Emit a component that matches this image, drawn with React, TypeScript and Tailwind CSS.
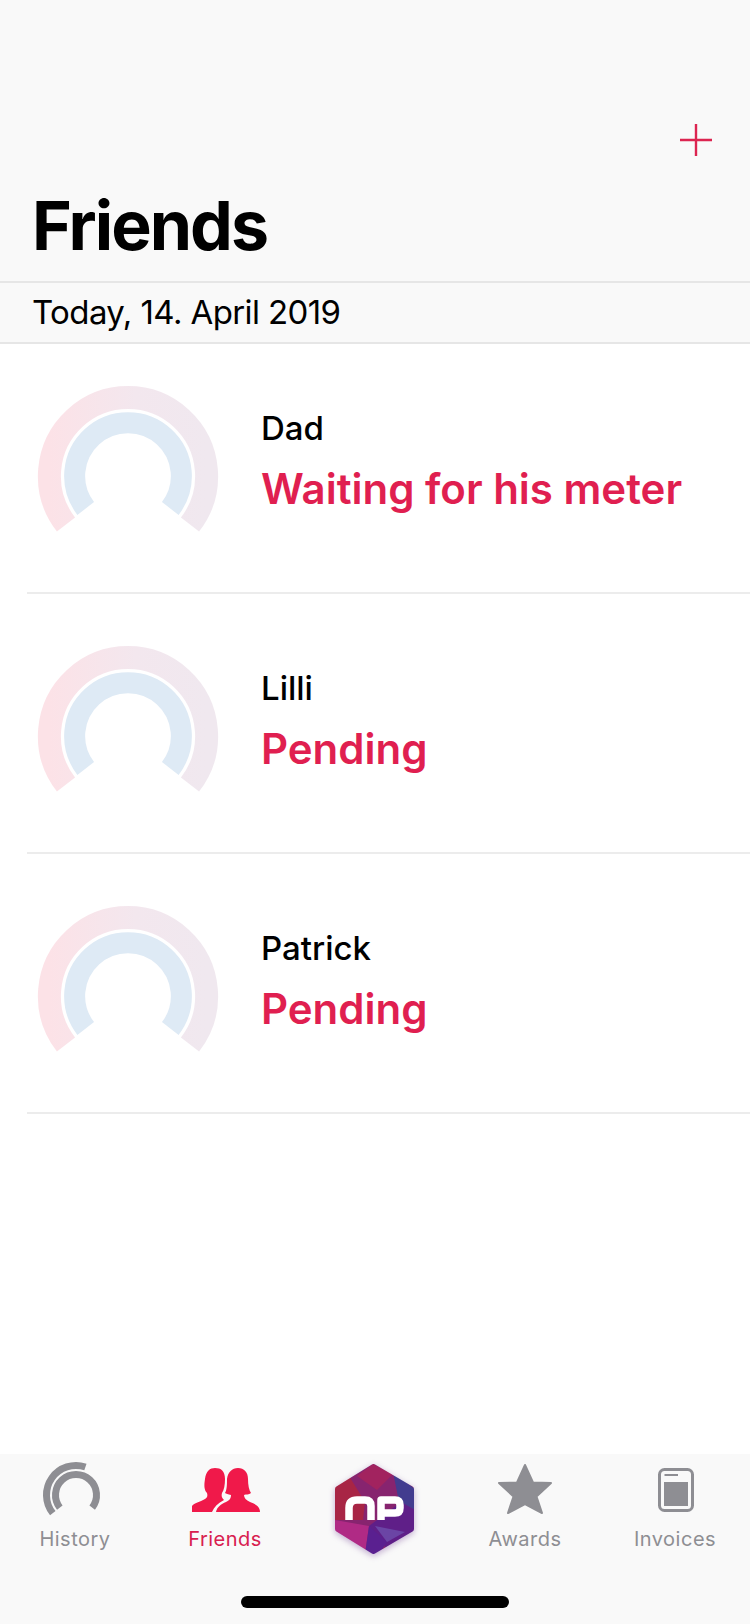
import React from 'react';

const friends = [
  { name: 'Dad', status: 'Waiting for his meter' },
  { name: 'Lilli', status: 'Pending' },
  { name: 'Patrick', status: 'Pending' },
];

function Gauge({ id }: { id: string }) {
  return (
    <svg width="178" height="150" viewBox="0 0 178 150" className="shrink-0 overflow-visible">
      <defs>
        <linearGradient id={id} x1="0" y1="0" x2="1" y2="0">
          <stop offset="0" stopColor="#fce2e7" />
          <stop offset="0.55" stopColor="#f3e7ee" />
          <stop offset="1" stopColor="#f0e8ef" />
        </linearGradient>
      </defs>
      <path d="M27 138.5 A78.6 78.6 0 1 1 151 138.5" fill="none" stroke={`url(#${id})`} strokeWidth="23" />
      <path d="M46.7 122.5 A53.35 53.35 0 1 1 131.3 122.5" fill="none" stroke="#deeaf5" strokeWidth="21" />
    </svg>
  );
}

function HistoryIcon() {
  return (
    <svg width="150" height="73" viewBox="0 0 150 73">
      <g fill="none" stroke="#8e8e93" strokeWidth="7">
        <path d="M52.8 59.2 A29.5 29.5 0 0 1 85.4 13" />
        <path d="M59.8 53.6 A20.5 20.5 0 1 1 92.2 53.6" />
      </g>
    </svg>
  );
}

function FriendsIcon() {
  return (
    <svg width="150" height="73" viewBox="0 0 150 73">
      <g fill="#f0194a">
        <path d="M42 58 V52 C44 49 50 48 55 45 C57 44 58 42 57 39 C54 36 54 31 55 25 C56 17 60 14 65 14 C71 14 75 17 75 25 C75 31 74 36 72 39 C71 42 72 44 74 46 C68 49 64 53 62 58 Z" />
        <path d="M66 58 C67 53 71 50 76 48 C80 46 81 44 81 41 C78 40 76 40 75 39 C77 36 77 30 77 25 C78 18 82 14 88 14 C94 14 98 18 98 25 C98 31 99 36 101 39 C99 41 96 40 94 41 C94 44 96 46 100 48 C105 50 110 52 110 58 Z" />
      </g>
    </svg>
  );
}

function AwardsIcon() {
  return (
    <svg width="150" height="73" viewBox="0 0 150 73">
      <path
        d="M75 11 L83 28.5 L101 29 L86.5 42.5 L92 59 L75 50 L58 59 L63.5 42.5 L49 29 L67 28.5 Z"
        fill="#8e8e93"
        stroke="#8e8e93"
        strokeWidth="2"
        strokeLinejoin="round"
      />
    </svg>
  );
}

function InvoicesIcon() {
  return (
    <svg width="150" height="73" viewBox="0 0 150 73">
      <rect x="59.5" y="15.5" width="33" height="41" rx="5" fill="none" stroke="#8e8e93" strokeWidth="3" />
      <rect x="64" y="28" width="24" height="24" fill="#8e8e93" />
      <rect x="64.5" y="20" width="13.5" height="2" fill="#8e8e93" />
    </svg>
  );
}

function Logo() {
  const hex = 'M38.5 3 L76 25 V65 L38.5 87 L3 65 V25 Z';
  return (
    <svg width="80" height="90" viewBox="0 0 80 90" className="drop-shadow-[0_2px_3px_rgba(90,30,130,0.35)]">
      <defs>
        <mask id="hex">
          <path d={hex} fill="#ffffff" stroke="#ffffff" strokeWidth="6" strokeLinejoin="round" />
        </mask>
      </defs>
      <g mask="url(#hex)">
        <polygon points="0,0 80,0 80,90 0,90" fill="#87246f" />
        <polygon points="0,22 14,12 30,38 28,56 0,56" fill="#a82545" />
        <polygon points="38,0 58,10 42,26 22,12" fill="#a2235f" />
        <polygon points="0,56 34,62 30,90 0,90" fill="#b02a85" />
        <polygon points="58,8 80,25 80,46 64,38" fill="#423c8f" />
        <polygon points="34,62 66,38 80,46 80,90 56,90" fill="#5f1f88" />
        <polygon points="34,62 52,78 44,90 30,90" fill="#5a2090" />
        <polygon points="40,62 70,68 52,78" fill="#6b45a5" />
      </g>
      <g fill="none" stroke="#ffffff" strokeWidth="7.5" strokeLinejoin="round">
        <path d="M14 56 V44 Q14 36 22 36 H30 Q36 36 36 42 V56" />
        <path d="M46 56 V36 H60 Q65 36 65 41 V44 Q65 49 60 49 H46" />
      </g>
    </svg>
  );
}

const tabs = [
  { label: 'History', icon: <HistoryIcon />, color: 'text-[#8e8e93]' },
  { label: 'Friends', icon: <FriendsIcon />, color: 'text-[#d8204f]' },
  { label: 'Awards', icon: <AwardsIcon />, color: 'text-[#8e8e93]' },
  { label: 'Invoices', icon: <InvoicesIcon />, color: 'text-[#8e8e93]' },
];

function Tab({ label, icon, color }: { label: string; icon: React.ReactNode; color: string }) {
  return (
    <div className="flex w-[150px] flex-col items-center">
      {icon}
      <span className={`text-[20px] leading-[24px] tracking-[0.5px] ${color}`}>{label}</span>
    </div>
  );
}

export default function App() {
  return (
    <div className="flex h-[1624px] w-[750px] flex-col overflow-hidden bg-white [font-family:Inter,sans-serif]">
      {/* Header */}
      <header className="flex h-[281px] flex-col bg-[#f9f9f9] px-[32px]">
        <div className="flex h-[186px] items-end justify-end pb-[30px] pr-[6px]">
          <svg width="32" height="32" viewBox="0 0 32 32">
            <path d="M16 0 V32 M0 16 H32" stroke="#dc2450" strokeWidth="2.4" />
          </svg>
        </div>
        <h1 className="text-[68px] leading-[78px] font-bold tracking-[-2px] text-black">Friends</h1>
      </header>

      {/* Date */}
      <div className="flex h-[63px] items-center border-y-2 border-[#e6e6e6] bg-[#f9f9f9] px-[32px] text-[33px] tracking-[-0.6px] text-black">
        Today, 14. April 2019
      </div>

      {/* List */}
      <main className="flex-1">
        {friends.map((f, i) => (
          <div
            key={f.name}
            className={
              i === 0
                ? 'ml-[27px] flex h-[250px] border-b-2 border-[#ececec] pl-[12px] pt-[42px]'
                : 'ml-[27px] flex h-[260px] border-b-2 border-[#ececec] pl-[12px] pt-[52px]'
            }
          >
            <Gauge id={`gauge-${i}`} />
            <div className="ml-[44px] flex flex-col pt-[20px]">
              <span className="text-[33px] leading-[44px] font-medium text-black">{f.name}</span>
              <span className="mt-[11px] text-[42px] leading-[56px] font-semibold text-[#e01f50]">{f.status}</span>
            </div>
          </div>
        ))}
      </main>

      {/* Tab bar */}
      <footer className="h-[170px] bg-[#f9f9f9]">
        <div className="flex">
          <Tab {...tabs[0]} />
          <Tab {...tabs[1]} />
          <div className="flex w-[150px] justify-center pt-[10px]">
            <Logo />
          </div>
          <Tab {...tabs[2]} />
          <Tab {...tabs[3]} />
        </div>
        <div className="mx-auto mt-[42px] h-[12px] w-[268px] rounded-full bg-black" />
      </footer>
    </div>
  );
}
